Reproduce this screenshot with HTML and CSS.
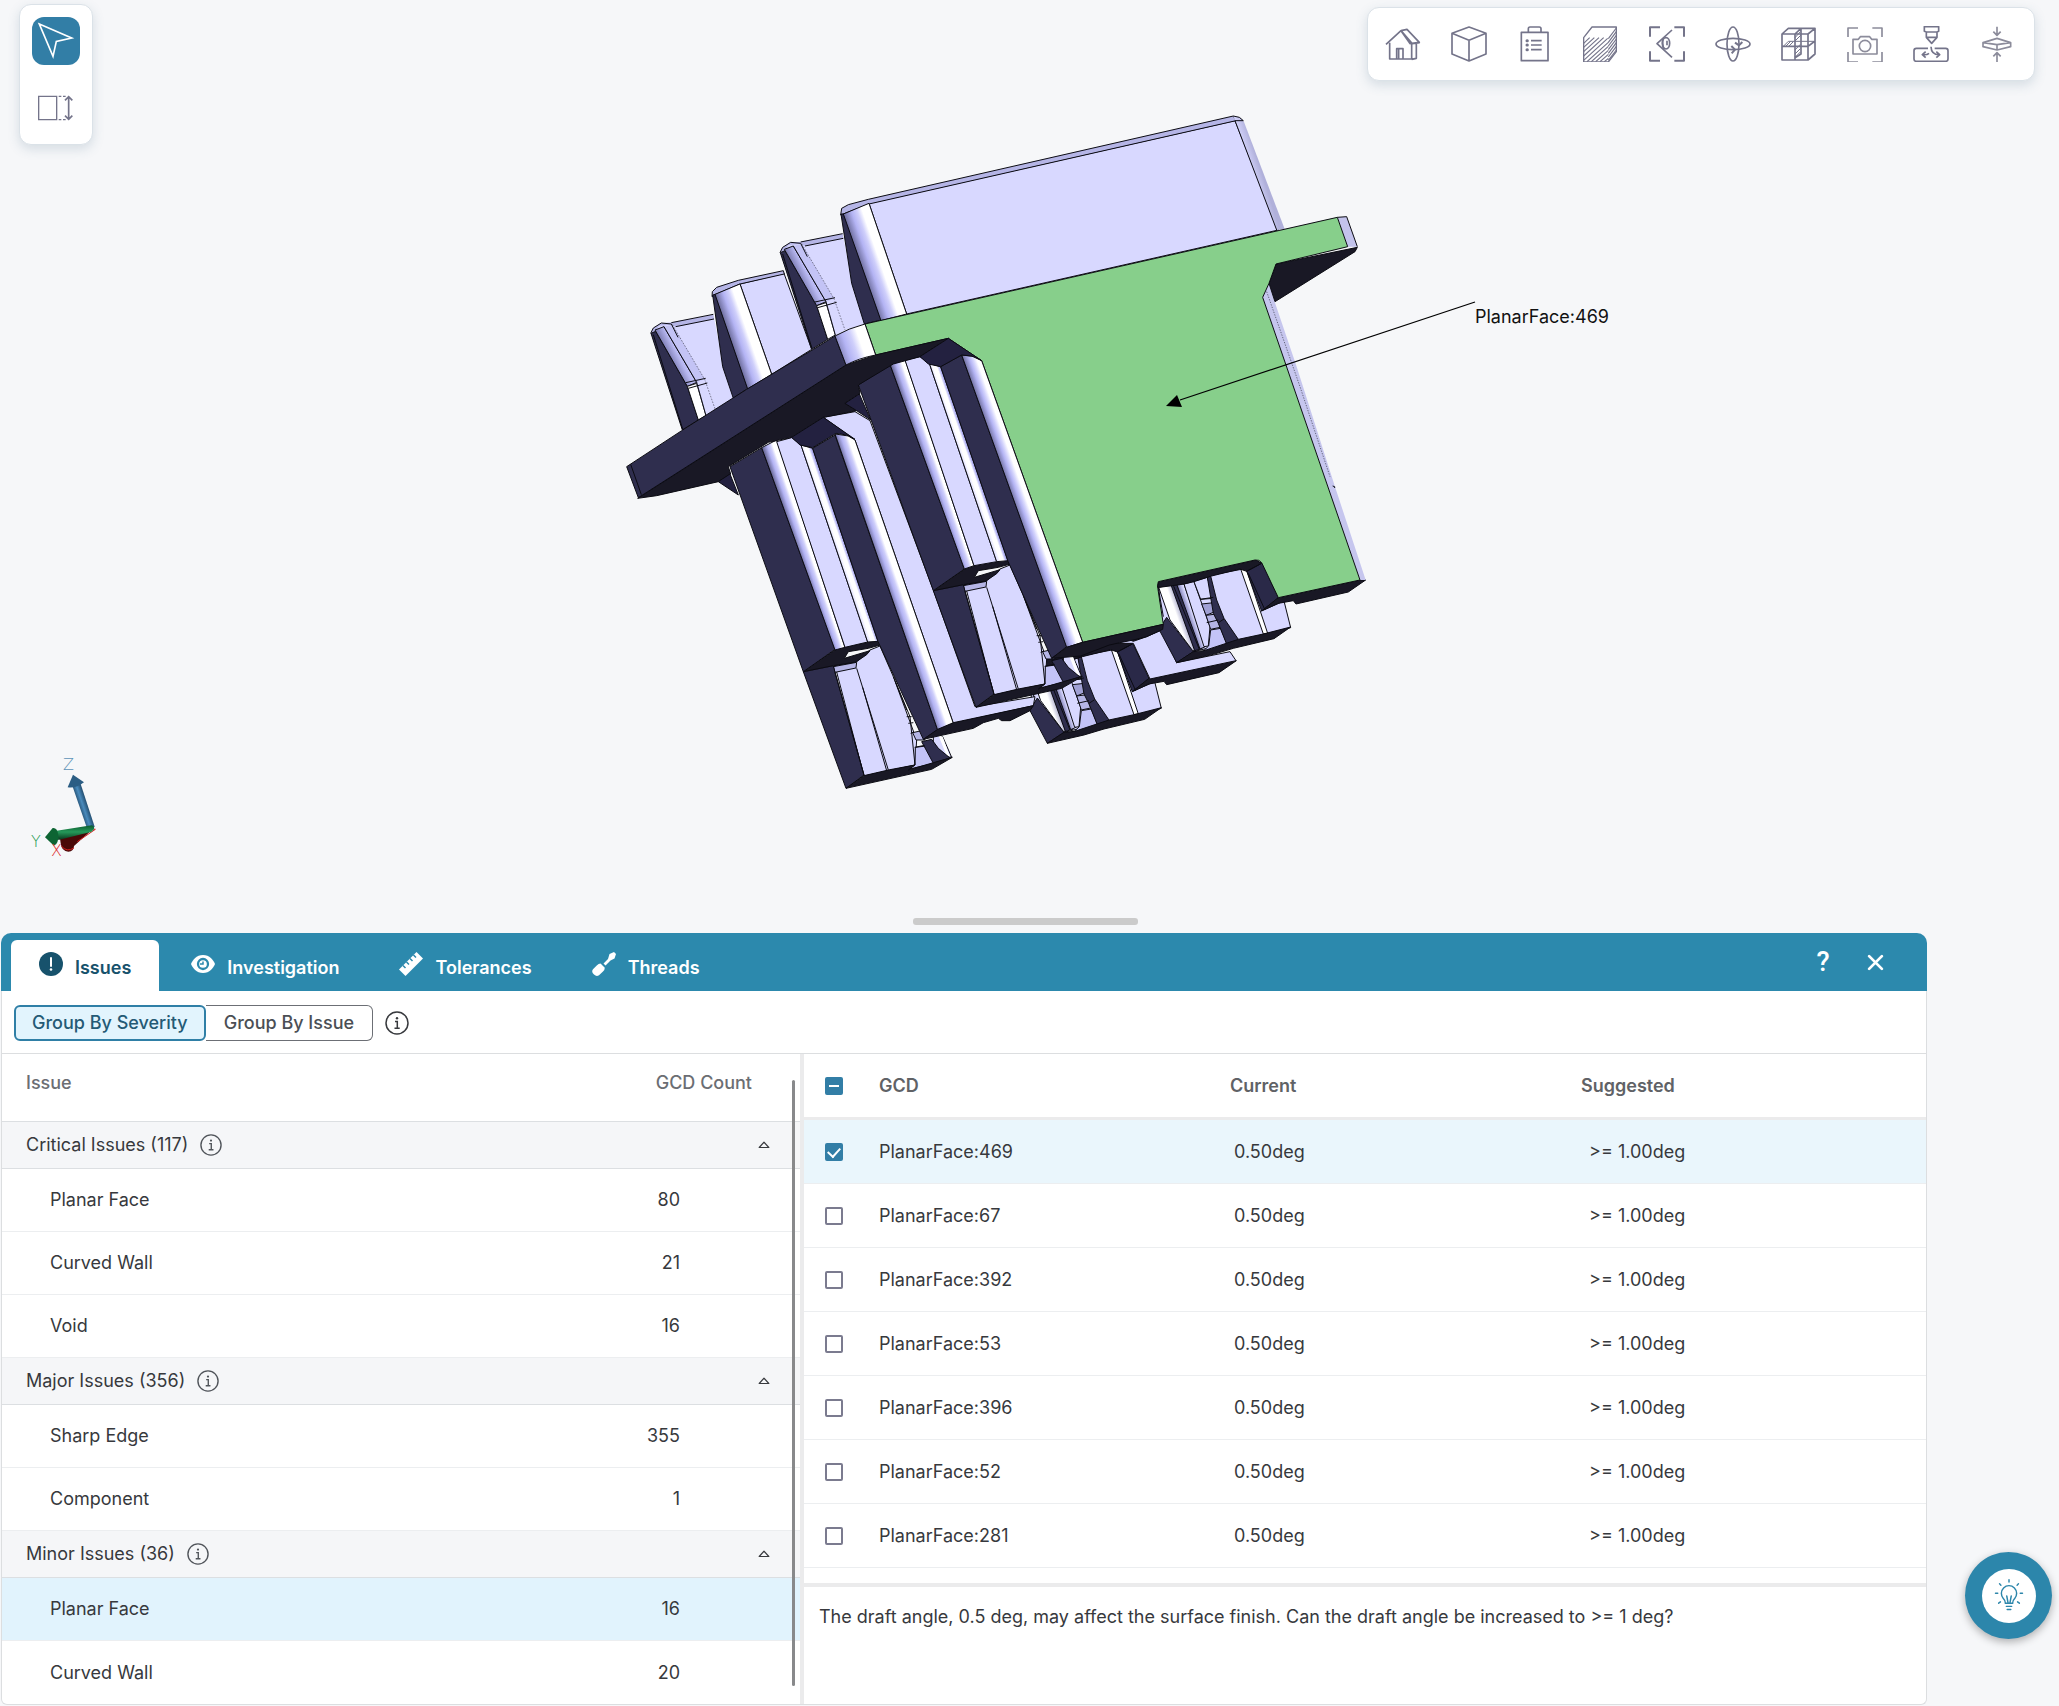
FILE: index.html
```html
<!DOCTYPE html>
<html lang="en">
<head>
<meta charset="utf-8">
<meta name="viewport" content="width=device-width, initial-scale=1">
<title>Issues – Part Viewer</title>
<link rel="stylesheet" href="styles.css">
</head>
<body>
<svg class="defs" aria-hidden="true">
  <symbol id="i-info" viewBox="0 0 24 24"><circle cx="12" cy="12" r="11" fill="none" stroke="currentColor" stroke-width="1.5"/><path d="M10 10.500h2.300v6.500M9.500 17.200h5.200" fill="none" stroke="currentColor" stroke-width="1.500"/><circle cx="12" cy="7.200" r="1.200" fill="currentColor"/></symbol>
  <symbol id="i-caret" viewBox="0 0 12 8"><path d="M1.200 6.500L6 1.200L10.800 6.500Z" fill="none" stroke="currentColor" stroke-width="1.200" stroke-linejoin="round"/></symbol>
</svg>
<main class="app">
  <section class="stage" aria-label="3D viewer">
    <svg class="model" viewBox="0 0 2059 914" role="img" aria-label="Part model">
      <defs>
        <linearGradient id="roll" gradientUnits="userSpaceOnUse" x1="0" y1="0" x2=".893" y2="-.308">
          <stop offset="0" stop-color="#6f6f9f"/><stop offset=".3" stop-color="#b4b4f4"/><stop offset=".5" stop-color="#cfcffb"/><stop offset=".68" stop-color="#fff"/><stop offset="1" stop-color="#fff"/>
        </linearGradient>
        <linearGradient id="rollBack" gradientUnits="userSpaceOnUse" x1="0" y1="0" x2=".893" y2="-.308">
          <stop offset="0" stop-color="#e6e6ff"/><stop offset=".2" stop-color="#fff"/><stop offset=".5" stop-color="#fff"/><stop offset=".7" stop-color="#b4b4f4"/><stop offset="1" stop-color="#6f6f9f"/>
        </linearGradient>
        <linearGradient id="r0" href="#roll" gradientTransform="translate(730 340) scale(88)"/>
        <linearGradient id="r1" href="#roll" gradientTransform="translate(345 580) scale(84)"/>
        <linearGradient id="r2" href="#roll" gradientTransform="translate(690 708) scale(125)"/>
        <linearGradient id="c1" href="#roll" gradientTransform="translate(128 140) scale(48)"/>
        <linearGradient id="c2" href="#rollBack" gradientTransform="translate(243 135) scale(37)"/>
        <linearGradient id="c3" href="#roll" gradientTransform="translate(345 105) scale(54)"/>
        <linearGradient id="c4" href="#roll" gradientTransform="translate(514 -105) scale(50)"/>
        <linearGradient id="c5" href="#rollBack" gradientTransform="translate(629 -110) scale(36)"/>
        <linearGradient id="c6" gradientUnits="userSpaceOnUse" x1="725" y1="-135" x2="773" y2="-152">
          <stop offset="0" stop-color="#6f6f9f"/><stop offset=".35" stop-color="#b4b4f4"/><stop offset=".55" stop-color="#d6d6fd"/><stop offset=".75" stop-color="#fff"/>
        </linearGradient>
        <linearGradient id="t1" gradientUnits="userSpaceOnUse" x1="600" y1="535" x2="645" y2="512"><stop offset="0" stop-color="#7f7fb5"/><stop offset=".5" stop-color="#b9b9f2"/><stop offset="1" stop-color="#cfcffa"/></linearGradient>
        <linearGradient id="d1" gradientUnits="userSpaceOnUse" x1="500" y1="320" x2="545" y2="304"><stop offset="0" stop-color="#fff"/><stop offset=".4" stop-color="#fff"/><stop offset="1" stop-color="#7a7ab0"/></linearGradient>
        <linearGradient id="d2" gradientUnits="userSpaceOnUse" x1="556" y1="330" x2="582" y2="321"><stop offset="0" stop-color="#7a7ab0"/><stop offset=".6" stop-color="#d6d6fd"/><stop offset="1" stop-color="#fff"/></linearGradient>
        <linearGradient id="side" gradientUnits="userSpaceOnUse" x1="1920" y1="100" x2="1945" y2="92"><stop offset="0" stop-color="#d0d0f8"/><stop offset="1" stop-color="#b0b0da"/></linearGradient>

        <g id="tower" class="part">
          <path class="lav edgeless" d="M540 455L545 444L570 428L600 425L728 402L760 560L795 672L735 690L683 718L635 748Z"/>
          <path class="lid edgeless" d="M540 460L548 442L572 427L602 426L728 402L730 415L615 438L600 432L565 435L550 458Z"/>
          <path class="dark" d="M541 458L555 452L650 617L683 718L635 748Z"/>
          <path fill="url(#t1)" d="M553 448L580 438L678 605L650 617Z"/>
          <path class="wht" d="M650 617L678 608L706 705L683 718Z"/>
          <path class="mid edgeless" d="M580 438L605 432L702 596L678 605Z"/>
          <path class="lav edgeless" d="M678 608L706 598L735 690L706 705Z"/>
          <path class="ln" d="M540 458L548 442L572 427L602 430L622 470M615 438L730 415M602 426L728 401M580 438L678 605L706 705M645 606L705 593M653 623L710 607M548 462L636 745"/>
          <path class="ln" opacity=".45" stroke-dasharray="5 4" d="M605 432L702 596L735 690"/>
        </g>

        <g id="pin" class="part">
          <path class="lav" d="M345 797L410 785L450 750L480 738L520 830L590 1020L585 1095L432 1128Z"/>
          <path class="lid" d="M340 800L410 787L408 804L345 817Z"/>
          <path class="dark" d="M250 815L340 797L345 817L432 1125L378 1165Z"/>
          <path class="blk" d="M250 815L345 750L375 740L470 722L481 735L445 745L385 755L373 775L450 752L440 764L408 786L340 797Z"/>
          <path class="lav" d="M640 1000L668 1010L695 1072L640 1060Z"/>
          <path class="wht edgeless" d="M655 1005L668 1010L690 1070L680 1068Z"/>
          <path class="soft" d="M586 1042L618 1038L642 1090L565 1108L585 1095Z"/>
          <path class="lid" d="M578 998L605 992L615 1020L588 1020Z"/>
          <path class="dark" d="M605 1025L635 1018L655 1045L690 1074L640 1090Z"/>
          <path class="blk" d="M378 1165L432 1127L505 1110L585 1095L565 1110L640 1088L697 1072L635 1108Z"/>
          <path class="ln" d="M410 805L505 1110M428 862L500 1112M432 1125L345 817M520 830L570 950L585 1095M526 845L560 930M560 950L575 950M565 970L580 968M572 1000L582 996M584 1042L614 1036"/>
        </g>

        <g id="plug" class="part">
          <path class="lav" d="M475 255L740 205L790 330L852 303L872 383L800 402L580 455L485 390Z"/>
          <path class="dark" d="M477 388L500 352L512 368L580 455L530 488Z"/>
          <path fill="url(#d1)" d="M476 262L516 254L586 452L578 452L510 360Z"/>
          <path class="dark" d="M512 252L530 252L606 446L584 452Z"/>
          <path fill="url(#d2)" d="M530 252L552 252L616 440L600 447Z"/>
          <path class="lav" d="M552 252L582 245L630 380L625 438L612 440Z"/>
          <path class="lav" d="M582 245L622 232L640 295L602 298Z"/>
          <path class="grey" d="M605 312L642 308L645 335L618 346Z"/>
          <path class="lid" d="M618 346L650 342L660 382L632 388Z"/>
          <path class="soft" d="M632 390L662 385L684 440L608 455L626 438Z"/>
          <path class="dark" d="M622 232L632 228L650 300L672 355L715 418L683 440L655 370L640 340Z"/>
          <path class="wht" d="M722 207L738 205L803 400L790 402Z"/>
          <path class="ln" d="M600 298L640 292M620 368L655 360M655 368L672 357M476 270L490 350M520 256L598 448"/>
          <path class="navy" d="M737 205L785 185L835 293L785 333Z"/>
          <path class="blk" d="M472 262L475 245L768 180L785 190L740 214L720 207L635 228L560 250L540 254L478 262Z"/>
          <path class="ln" d="M740 214L785 190M745 220L795 330"/>
          <path class="blk" d="M530 488L580 455L612 452L715 418L790 402L872 381L822 416L700 445L640 463Z"/>
          <path class="blk" d="M785 333L835 293L850 290L1080 240L1097 240L1045 276L888 312L880 302L835 310Z"/>
        </g>
        <linearGradient id="axz" gradientUnits="userSpaceOnUse" x1="235" y1="205" x2="265" y2="195"><stop offset="0" stop-color="#1d4565"/><stop offset=".5" stop-color="#4a8bbd"/><stop offset="1" stop-color="#1d4565"/></linearGradient>
        <linearGradient id="axy" x1="0" y1="0" x2="0" y2="1"><stop offset="0" stop-color="#0b5a2d"/><stop offset=".45" stop-color="#26995a"/><stop offset="1" stop-color="#07351b"/></linearGradient>
      </defs>

      <g class="part" transform="translate(600 100) scale(.3333333)">
        <use href="#tower" x="-388" y="242"/>
        <path class="lav" d="M420 552L552 520L635 748L515 823Z"/>
        <path class="lid" d="M336 590L337 575L350 562L415 541L550 512L553 522L420 552L345 584Z"/>
        <path class="dark" d="M338 585L346 583L443 865L400 895L368 800Z"/>
        <path fill="url(#r1)" d="M345 583L420 552L515 823L443 867Z"/>
        <use href="#tower"/>
        <path class="lav" d="M807 310L1905 62L2035 390L920 642Z"/>
        <path class="lid" d="M722 345L725 325L745 314L805 298L1900 48L1908 62L807 312L730 342Z"/>
        <path class="edgeless" fill="url(#side)" d="M1900 48L1920 52L1932 66L2054 387L2030 390L1905 62Z"/>
        <path class="ln" d="M1900 48L1918 52L1930 62L1905 62L2030 390"/>
        <path class="dark" d="M723 342L732 342L843 660L793 672L755 550Z"/>
        <path fill="url(#r0)" d="M730 342L807 310L920 642L843 662Z"/>

        <g transform="translate(1200 1200)">
          <use href="#plug" x="-388" y="242"/>
          <path class="lav" d="M330 430L485 385L530 488L690 455L708 482L450 537L400 430Z"/>
          <path class="blk" d="M390 420L485 390L440 410L400 424Z"/>
          <use href="#plug"/>
        </g>

        <path class="edgeless" fill="#c6c6ee" d="M2007 550L1988 592L2280 1440L2297 1440L2205 1160L2090 800L2024 605Z"/>
        <path class="ln" stroke-dasharray="4 4" d="M2000 575L2100 860L2190 1130" opacity=".5"/>
        <path class="ln" d="M2198 1158l6 2v4"/>
        <path class="edgeless" fill="#c3c3ec" d="M2212 352L2240 350L2272 440L2243 440Z"/>
        <path class="ln" d="M2212 352L2240 350M2240 350L2272 440"/>
        <path class="blk" d="M2028 492L2272 442L2265 455L2025 605L2007 550Z"/>
        <path class="green" d="M795 672L2212 352L2243 440L2028 492L2007 550L1988 592L2280 1440L2035 1493L1985 1388Q1978 1378 1965 1380L1675 1445Q1670 1455 1675 1475L1690 1573L1448 1627L1145 782L1045 715L827 765Z"/>

        <g transform="translate(360 900)">
          <path class="lav" d="M310 52L405 35L450 62L640 570L765 920L945 890L940 917L700 970L405 120Z"/>
          <use href="#pin"/>
          <path class="dark" d="M30 200L125 143L345 748L250 815Z"/>
          <path fill="url(#c1)" d="M125 143L170 120L375 742L345 750Z"/>
          <path class="lav" d="M170 125L215 113L243 135L443 726L375 742Z"/>
          <path fill="url(#c2)" d="M243 135L278 145L474 724L443 726Z"/>
          <path class="dark" d="M278 145L345 105L653 990L610 1018L474 724Z"/>
          <path fill="url(#c3)" d="M345 102L385 108L405 120L700 970L653 990Z"/>
          <path class="blk" d="M610 1018L653 988L700 968L940 917L930 932L870 962L845 962L835 955L790 968L760 985Z"/>
          <use href="#pin" x="390" y="-243"/>
          <path class="dark" d="M415 -45L510 -107L733 507L640 572Z"/>
          <path fill="url(#c4)" d="M510 -107L555 -122L762 497L733 507Z"/>
          <path class="lav" d="M555 -120L600 -130L628 -110L830 485L762 497Z"/>
          <path fill="url(#c5)" d="M628 -110L662 -100L864 482L830 485Z"/>
          <path class="dark" d="M662 -100L725 -135L1040 740L995 775L864 484Z"/>
          <path fill="url(#c6)" d="M725 -135L765 -130L785 -118L1088 727L1040 742Z"/>
          <path class="blk" d="M995 775L1040 742L1088 727L1330 673L1328 688L1280 710L1240 720L1200 728L1168 735L1082 768Z"/>
        </g>

        <path class="blk" d="M113 1195L738 795L827 765L1045 715L960 770L880 792L775 855L780 880L735 910L770 932L670 952L575 1012L505 1027L385 1100L392 1122L355 1145L170 1187Z"/>
        <path class="deep" d="M355 1145L390 1122L415 1185Z"/>
        <path class="deep" d="M735 910L778 882L812 960L770 932Z"/>
        <path class="deep" d="M575 1012L670 952L765 1018L740 1005L708 1000L638 1043L600 1035Z"/>
        <path class="deep" d="M960 770L1045 715L1145 782L1115 768L1085 765L1022 800L985 792Z"/>
        <path class="dark" d="M80 1100L245 992L440 868L640 748L705 708L738 795L115 1193Z"/>
        <path class="ln" d="M92 1093L124 1184"/>
        <path fill="url(#r2)" d="M705 708Q745 685 795 672L827 765Q775 775 738 795Z"/>
      </g>

      <g class="callout">
        <path d="M1475 302L1180 400" stroke="#000" stroke-width="1.300"/>
        <path d="M1166 406L1177 395L1182 407Z"/>
        <text x="1475" y="323">PlanarFace:469</text>
      </g>

      <g transform="translate(0 740) scale(.3333333)">
        <path d="M180 295L282 264L222 318Q222 334 205 335Q185 335 182 310Z" fill="#4a0808"/>
        <path d="M184 318Q200 338 222 324M272 266L286 268L232 305" fill="none" stroke="#d42020" stroke-width="3"/>
        <path d="M218 140L242 132L284 260Q272 268 260 262Z" fill="url(#axz)"/>
        <path d="M219 104L252 127Q228 146 203 142Z" fill="#2b5d84"/>
        <path d="M170 272L275 256Q284 258 282 267L275 275L175 300Z" fill="url(#axy)"/>
        <path d="M135 292L158 264Q172 262 175 285Q176 312 162 317Z" fill="#0d6433"/>
      </g>
      <g class="axis-labels">
        <text x="63" y="770" fill="#5d93b8">Z</text>
        <text x="31" y="847" fill="#1c9a50">Y</text>
        <text x="51" y="856" fill="#dc2424">X</text>
      </g>
    </svg>

    <div class="tools tools-left" role="toolbar" aria-label="Selection">
      <button class="tool active" type="button" aria-label="Select"><svg viewBox="0 0 144 144"><path d="M22 21L119 63L73 73L63 118Z" fill="none" stroke="#fff" stroke-width="5"/></svg></button>
      <button class="tool" type="button" aria-label="Measure"><svg viewBox="0 0 144 144" fill="none" stroke="currentColor" stroke-width="4"><path d="M20 37h54v70H20Z"/><path d="M80 37h24M80 107h24" stroke-dasharray="8 5"/><path d="M110 38v68M99 49l11-11 11 11M99 95l11 11 11-11" stroke-width="5"/></svg></button>
    </div>

    <div class="tools tools-top" role="toolbar" aria-label="View">
      <button class="tool" type="button" aria-label="Home"><svg viewBox="0 0 108 108"><path d="M3 55L48 14L76 54M14 50V99H80V50M48 14L66 10L103 49L81 52M94 51V97L80 100M48 14L81 52M76 54L104 50M35 99V68H54V99M41 70v28"/></svg></button>
      <button class="tool" type="button" aria-label="Isometric view"><svg viewBox="0 0 108 108"><path d="M54 3L105 22V84L54 105L3 84V22ZM3 22L54 43L105 22M54 43V105"/></svg></button>
      <button class="tool" type="button" aria-label="Properties"><svg viewBox="0 0 108 108"><path d="M13 19H93V104H13ZM34 18V8Q34 3 39 3H67Q72 3 72 8V18M42 44H74M42 57H74M42 71H74"/><path stroke-width="9" stroke-linecap="round" d="M30 44h1M30 57h1M30 71h1"/></svg></button>
      <button class="tool" type="button" aria-label="Shading"><svg viewBox="0 0 108 108"><path stroke-width="4" d="M2 35L27 3H100V77L76 108H2Z"/><path stroke-width="3.500" d="M2 52L20 35M2 64L34 35M2 77L48 35M2 90L62 35M2 103L74 37M12 107L76 49M25 107L76 61M38 107L76 73M51 107L76 85M64 107L76 97M76 38L100 6M76 49L100 17M76 60L100 28M76 71L100 39M76 82L100 50M76 93L100 61M76 103L100 72"/></svg></button>
      <button class="tool" type="button" aria-label="Look at"><svg viewBox="0 0 108 108"><path d="M3 32V4H33M76 4H105V32M105 76V104H76M33 104H3V76" stroke-width="6"/><path d="M69 12L24 53L69 94M43 37Q38 52 45 70"/><ellipse cx="51" cy="52" rx="11" ry="17"/><path d="M54 44v14"/></svg></button>
      <button class="tool" type="button" aria-label="Rotate"><svg viewBox="0 0 108 108"><ellipse cx="54" cy="54" rx="51" ry="17"/><ellipse cx="54" cy="54" rx="18" ry="51"/><path stroke-width="6" d="M60 50L72 58L82 48M49 60L60 71L50 82"/></svg></button>
      <button class="tool" type="button" aria-label="Section"><svg viewBox="0 0 108 108"><path d="M3 24H81V102H3ZM3 24L22 7H102V84L81 102M81 24L102 7M3 61H81L102 45M42 24L60 7V84L42 95ZM42 24V100"/><path stroke-width="3" d="M8 60L22 46H100M15 60L28 47M24 60L37 47M42 45L60 27M42 35L58 17M42 72L58 55M42 84L58 68M42 94L58 78"/></svg></button>
      <button class="tool soft-tool" type="button" aria-label="Capture"><svg viewBox="0 0 108 108"><path d="M3 33V6H33M76 6H105V33M105 78V108H76M33 108H3V78" stroke-width="5"/><path d="M18 40H34L40 32H68L74 40H90V84H18Z"/><circle cx="54" cy="60" r="17"/></svg></button>
      <button class="tool" type="button" aria-label="Machining"><svg viewBox="0 0 108 108"><path d="M34 2H77V16L72 18V34L56 52L40 34V18L34 16ZM38 18H74M40 34H72"/><path d="M45 67H10Q3 67 3 74V99Q3 106 10 106H98Q105 106 105 99V74Q105 67 98 67H65M54 62Q55 86 78 86M48 82Q42 87 30 86M38 77L28 86L38 95M70 77L80 86L70 95"/></svg></button>
      <button class="tool soft-tool" type="button" aria-label="Parting line"><svg viewBox="0 0 108 108"><path d="M12 50L54 37L95 50V62L54 72L12 62ZM12 50L54 56L95 50M54 56V72M54 2V28M43 17L54 28L65 17M54 108V80M43 91L54 80L65 91"/></svg></button>
    </div>
  </section>

  <div class="splitter" role="separator" aria-label="Resize panel"><span class="grip"></span></div>

  <section class="panel">
    <header class="panel-head">
      <nav class="tabs">
        <a class="tab current" href="#issues"><svg viewBox="0 0 24 24"><circle cx="12" cy="12" r="12" fill="currentColor"/><path d="M12 6v8" stroke="#fff" stroke-width="2" stroke-linecap="round"/><circle cx="12" cy="17.500" r="1.300" fill="#fff"/></svg>Issues</a>
        <a class="tab" href="#investigation"><svg viewBox="0 0 24 24"><path d="M12 3C5.500 3 1.500 8 0 12C1.500 16 5.500 21 12 21S22.500 16 24 12C22.500 8 18.500 3 12 3Z" fill="currentColor"/><circle cx="12" cy="12" r="5" fill="none" stroke="#2c89ad" stroke-width="2.300"/><path d="M12 9.500V12H9" fill="none" stroke="#2c89ad" stroke-width="1.500"/></svg>Investigation</a>
        <a class="tab" href="#tolerances"><svg viewBox="0 0 24 24"><path d="M0 17.500L17.500 0L24 6.500L6.500 24Z" fill="currentColor"/><path d="M4 13.500l2.500 2.500M7.500 10l2.500 2.500M11 6.500l2.500 2.500M14.500 3l2.500 2.500" stroke="#2c89ad" stroke-width="1.500"/></svg>Tolerances</a>
        <a class="tab" href="#threads"><svg viewBox="0 0 24 24" fill="currentColor"><path d="M22 0L24 2L22.500 6.500L18.500 8.500L13.500 13.500L11.500 11.500L16 7L17.500 2Z"/><path d="M8.500 11.500L12.800 15.800Q12.800 18 11 19.500L7 23.200Q4.500 25 2 22.500Q-1 20 1 17.300L5 13.300Q6.500 11.500 8.500 11.500Z"/></svg>Threads</a>
      </nav>
      <div class="head-actions">
        <button class="head-btn" type="button" aria-label="Help">?</button>
        <button class="head-btn" type="button" aria-label="Close"><svg viewBox="0 0 16 16"><path d="M2 2L14 14M14 2L2 14" stroke="currentColor" stroke-width="2.600" stroke-linecap="round"/></svg></button>
      </div>
    </header>

    <div class="group-bar">
      <div class="segmented"><button class="seg on" type="button">Group By Severity</button><button class="seg" type="button">Group By Issue</button></div>
      <svg class="info-lg" aria-hidden="true"><use href="#i-info"/></svg>
    </div>

    <div class="columns">
      <div class="issues">
        <table class="issue-table">
          <thead><tr><th>Issue</th><th class="count">GCD Count</th></tr></thead>
          <tbody>
            <tr class="group"><th colspan="2"><div class="group-cell">Critical Issues (117)<svg class="info"><use href="#i-info"/></svg><button class="caret" type="button" aria-label="Collapse critical issues"><svg><use href="#i-caret"/></svg></button></div></th></tr>
            <tr><td>Planar Face</td><td class="num">80</td></tr>
            <tr><td>Curved Wall</td><td class="num">21</td></tr>
            <tr><td>Void</td><td class="num">16</td></tr>
            <tr class="group"><th colspan="2"><div class="group-cell">Major Issues (356)<svg class="info"><use href="#i-info"/></svg><button class="caret" type="button" aria-label="Collapse major issues"><svg><use href="#i-caret"/></svg></button></div></th></tr>
            <tr><td>Sharp Edge</td><td class="num">355</td></tr>
            <tr><td>Component</td><td class="num">1</td></tr>
            <tr class="group"><th colspan="2"><div class="group-cell">Minor Issues (36)<svg class="info"><use href="#i-info"/></svg><button class="caret" type="button" aria-label="Collapse minor issues"><svg><use href="#i-caret"/></svg></button></div></th></tr>
            <tr class="picked"><td>Planar Face</td><td class="num">16</td></tr>
            <tr><td>Curved Wall</td><td class="num">20</td></tr>
          </tbody>
        </table>
        <span class="thumb"></span>
      </div>
      <div class="details">
        <table class="gcd-table">
          <colgroup><col class="c-check"><col class="c-wide"><col class="c-wide"><col></colgroup>
          <thead><tr><th class="check"><input class="mixed" type="checkbox" aria-label="Select all"></th><th>GCD</th><th>Current</th><th>Suggested</th></tr></thead>
          <tbody>
            <tr class="picked"><td class="check"><input type="checkbox" id="g469" checked></td><td><label for="g469">PlanarFace:469</label></td><td class="cur">0.50deg</td><td class="sug">&gt;= 1.00deg</td></tr>
            <tr><td class="check"><input type="checkbox" id="g67"></td><td><label for="g67">PlanarFace:67</label></td><td class="cur">0.50deg</td><td class="sug">&gt;= 1.00deg</td></tr>
            <tr><td class="check"><input type="checkbox" id="g392"></td><td><label for="g392">PlanarFace:392</label></td><td class="cur">0.50deg</td><td class="sug">&gt;= 1.00deg</td></tr>
            <tr><td class="check"><input type="checkbox" id="g53"></td><td><label for="g53">PlanarFace:53</label></td><td class="cur">0.50deg</td><td class="sug">&gt;= 1.00deg</td></tr>
            <tr><td class="check"><input type="checkbox" id="g396"></td><td><label for="g396">PlanarFace:396</label></td><td class="cur">0.50deg</td><td class="sug">&gt;= 1.00deg</td></tr>
            <tr><td class="check"><input type="checkbox" id="g52"></td><td><label for="g52">PlanarFace:52</label></td><td class="cur">0.50deg</td><td class="sug">&gt;= 1.00deg</td></tr>
            <tr><td class="check"><input type="checkbox" id="g281"></td><td><label for="g281">PlanarFace:281</label></td><td class="cur">0.50deg</td><td class="sug">&gt;= 1.00deg</td></tr>
          </tbody>
        </table>
        <p class="advice">The draft angle, 0.5 deg, may affect the surface finish. Can the draft angle be increased to &gt;= 1 deg?</p>
      </div>
    </div>
  </section>
</main>

<button class="fab" type="button" aria-label="Suggestions"><span class="fab-disc"><svg viewBox="0 0 40 40" fill="none" stroke="currentColor" stroke-width="1.600" stroke-linecap="round"><path d="M16 28Q16 25 13.500 22.500Q11.500 20 11.500 17A8.500 8.500 0 0 1 28.500 17Q28.500 20 26.500 22.500Q24 25 24 28ZM17 31.500h6M18 35h4M19 28L17.500 20M21 28L22.500 20M20 2v2.500M9.500 6.500l1.500 1.500M30.500 6.500L29 8M5 17h2.500M32.500 17H35M8.500 28l2-1.500M31.500 28l-2-1.500"/></svg></span></button>
</body>
</html>
```
FILE: styles.css
```css
* { box-sizing: border-box; }

body {
  margin: 0;
  background: #f6f7f9;
  color: #37393d;
  font: 400 18px/24px Inter, "Liberation Sans", sans-serif;
}

button, input { font: inherit; color: inherit; }
button { padding: 0; border: 0; background: none; cursor: pointer; }
a { color: inherit; text-decoration: none; }
table { width: 100%; border-collapse: separate; border-spacing: 0; }
th { font-weight: 500; text-align: left; }
th, td { padding: 0; }
.defs { display: none; }

.app { display: flex; flex-direction: column; min-height: 100vh; }

/* viewer */
.stage { position: relative; }
.model { display: block; width: 100%; height: auto; }
.part path { stroke: #0b0b12; stroke-width: 3; stroke-linejoin: round; }
.part .edgeless { stroke: none; }
.part .ln { fill: none; }
.lav { fill: #d8d8ff; }
.lid { fill: #b5b5e6; }
.mid { fill: #c3c3f5; }
.soft { fill: #c3c3f7; }
.grey { fill: #a0a0d4; }
.wht { fill: #fff; }
.dark { fill: #2f2e4e; }
.navy { fill: #2a2948; }
.deep { fill: #232140; }
.blk { fill: #191825; }
.green { fill: #87cf8b; }
.callout text { font-size: 18px; fill: #111; }
.axis-labels text { font: 200 16px "DejaVu Sans", sans-serif; }

.tools {
  position: absolute;
  display: flex;
  background: #fff;
  border: 1px solid #dbe2e8;
  border-radius: 12px;
  box-shadow: 0 4px 12px rgba(60, 100, 130, .18);
}
.tools-left { top: 4px; left: 19px; flex-direction: column; gap: 19px; padding: 12px; }
.tools-top { top: 7px; right: 24px; padding: 0 4px 0 2px; }
.tool { display: grid; place-items: center; color: #74748a; }
.tool svg { display: block; }
.tools-left .tool { width: 48px; height: 48px; border-radius: 12px; }
.tools-left svg { width: 48px; height: 48px; }
.tools-left .active { background: #327ea6; }
.tools-top .tool { width: 66px; height: 72px; }
.tools-top svg { width: 36px; height: 36px; fill: none; stroke: currentColor; stroke-width: 5; stroke-linejoin: round; }
.tools-top .soft-tool { color: #8c8c9b; }

.splitter { display: flex; justify-content: center; padding: 4px 8px 8px 0; }
.grip { width: 225px; height: 7px; border-radius: 3px; background: #cbcbcb; }

/* bottom panel */
.panel {
  margin: 0 132px 1px 1px;
  border: 1px solid #dcdee0;
  border-top: 0;
  border-radius: 10px 10px 6px 6px;
  background: #fff;
}
.panel-head {
  display: flex;
  justify-content: space-between;
  height: 58px;
  margin: 0 -1px;
  padding: 7px 40px 0 10px;
  border-radius: 10px 10px 0 0;
  background: #2c89ad;
  color: #fff;
}
.tabs { display: flex; gap: 4px; }
.tab {
  display: flex;
  align-items: center;
  gap: 12px;
  height: 54px;
  padding: 2px 28px 0;
  border-radius: 6px 6px 0 0;
  font-weight: 600;
}
.tab svg { width: 24px; height: 24px; margin-bottom: 8px; }
.tab.current { background: #fff; color: #17526c; }
.head-actions { display: flex; gap: 28px; height: 44px; align-items: center; }
.head-btn { width: 24px; height: 32px; display: grid; place-items: center; font: 500 27px/32px Roboto, sans-serif; }
.head-btn svg { width: 17px; height: 17px; }

.group-bar {
  display: flex;
  align-items: center;
  gap: 12px;
  padding: 14px 12px 12px;
  border-bottom: 1px solid #dcdee0;
}
.segmented { display: flex; }
.seg {
  height: 36px;
  padding: 0 18px;
  border: 1px solid #6c6f75;
  border-left: 0;
  border-radius: 0 6px 6px 0;
  color: #4b4f55;
  font-weight: 500;
}
.seg.on { padding: 0 16px; border: 2px solid #2f7fa6; border-radius: 6px; background: #e2f4fd; color: #245a75; }
.info-lg { width: 24px; height: 24px; }

.columns { display: grid; grid-template-columns: 798fr 1126fr; }
.issues { position: relative; }
.issue-table thead th { height: 68px; padding: 0 0 9px 24px; border-bottom: 1px solid #dcdfe2; color: #6b6e73; }
.issue-table thead .count { padding: 0 48px 9px 0; text-align: right; }
.issue-table td { height: 63px; padding: 0 0 0 48px; border-bottom: 1px solid #eceef0; }
.issue-table tr:last-child td { border-bottom: 0; }
.issue-table .num { padding: 0 120px 0 0; text-align: right; }
.group th { height: 47px; border-bottom: 1px solid #dcdfe2; background: #f5f6f8; font-weight: 400; }
.group-cell { display: flex; align-items: center; gap: 12px; padding: 0 30px 0 24px; }
.info { width: 22px; height: 22px; color: #50545a; }
.caret { width: 12px; height: 12px; margin-left: auto; }
.caret svg { display: block; width: 12px; height: 8px; }
.issue-table .picked td { background: #e1f3fd; }
.thumb { position: absolute; top: 26px; right: 5px; bottom: 18px; width: 3px; border-radius: 2px; background: #88898b; }

.details { border-left: 4px solid #ebebec; }
.gcd-table { table-layout: fixed; }
.c-check { width: 75px; }
.c-wide { width: 351px; }
.gcd-table thead th { height: 66px; border-bottom: 3px solid #ebebec; color: #606266; font-weight: 600; }
.gcd-table td { height: 64px; border-bottom: 1px solid #eceef0; }
.gcd-table .picked td { background: #eaf6fc; }
.gcd-table .check { padding-left: 21px; }
.gcd-table .cur { padding-left: 4px; }
.gcd-table .sug { padding-left: 8px; }
.check input {
  display: grid;
  place-items: center;
  appearance: none;
  width: 18px;
  height: 18px;
  margin: 0;
  border: 2px solid #7b7b8f;
  border-radius: 2px;
  background: #fff;
}
.check input:checked, .check .mixed { border-color: #327ea6; background: #327ea6; }
.check input:checked::after { content: ""; width: 6px; height: 10px; margin-bottom: 4px; border: solid #fff; border-width: 0 2px 2px 0; transform: rotate(42deg); }
.check .mixed::after { content: ""; width: 10px; height: 2px; background: #fff; }
.advice { margin: 15px 0 0; padding: 18px 15px; border-top: 4px solid #ebebec; }

.fab {
  position: fixed;
  right: 7px;
  bottom: 67px;
  display: grid;
  place-items: center;
  width: 87px;
  height: 87px;
  border-radius: 50%;
  background: #2c86ab;
  box-shadow: 0 3px 8px rgba(0, 0, 0, .3);
}
.fab-disc { display: grid; place-items: center; width: 54px; height: 54px; border-radius: 50%; background: #fff; color: #2c86ab; }
.fab-disc svg { width: 36px; height: 36px; }
```
